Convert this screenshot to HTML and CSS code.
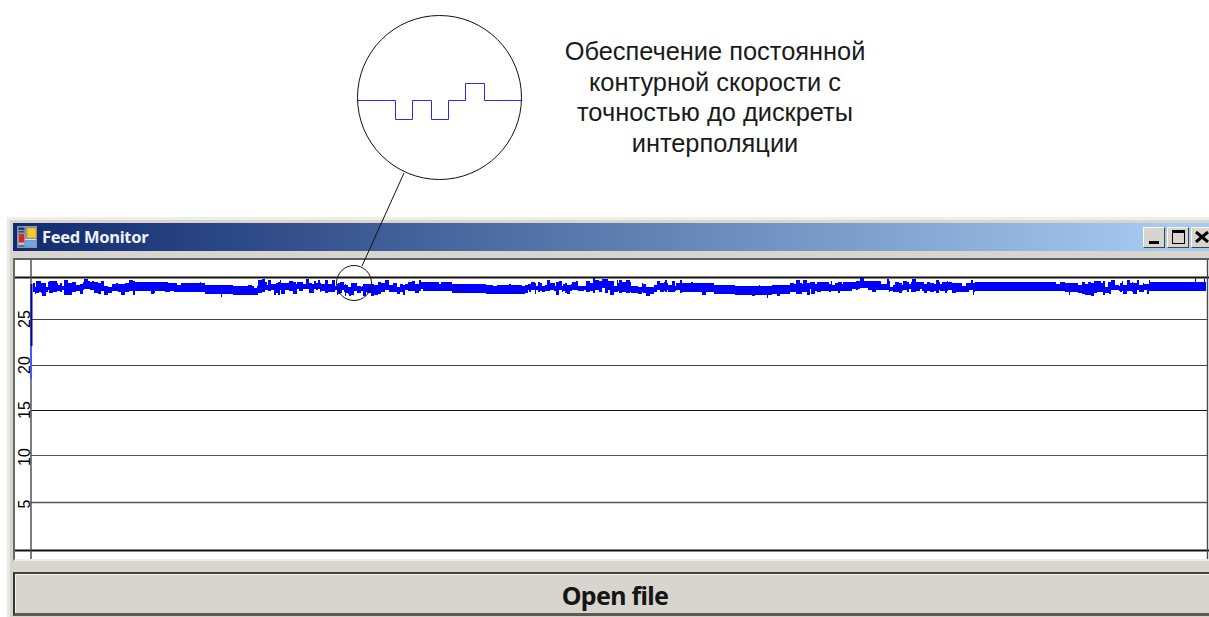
FILE: index.html
```html
<!DOCTYPE html>
<html lang="ru">
<head>
<meta charset="utf-8">
<title>Feed Monitor</title>
<link rel="stylesheet" href="styles.css">
</head>
<body>
<main class="page">
  <section class="note">
    <p class="note-text">Обеспечение постоянной<br>контурной скорости с<br>точностью до дискреты<br>интерполяции</p>
  </section>

  <section class="window">
    <header class="titlebar">
      <svg class="app-icon" viewBox="0 0 20 22" aria-hidden="true">
        <rect width="20" height="22" fill="#8b98ab"/>
        <rect x="1.5" y="1.5" width="6" height="2.5" fill="#1f3a78"/>
        <rect x="1.5" y="5" width="6" height="1.5" fill="#2c4a8c"/>
        <rect x="2" y="8" width="5" height="8" fill="#d62a20"/>
        <rect x="1.5" y="17.5" width="6" height="1" fill="#e8ecf2"/>
        <rect x="1.5" y="19.5" width="6" height="1" fill="#3a4a68"/>
        <rect x="10" y="2" width="9" height="10" fill="#f5c93a" stroke="#c08a10" stroke-width=".6"/>
        <rect x="8" y="13" width="11" height="1" fill="#dfe4ec"/>
        <rect x="9" y="15" width="9" height="5" fill="#6aa6ee"/>
      </svg>
      <span class="title">Feed Monitor</span>
      <div class="controls">
        <span class="ctl ctl-min"><i></i></span>
        <span class="ctl ctl-max"><i></i></span>
        <span class="ctl ctl-close">
          <svg viewBox="0 0 14 12" aria-hidden="true"><path d="M1 1 13 11M13 1 1 11" stroke="#000" stroke-width="3" fill="none"/></svg>
        </span>
      </div>
    </header>

    <div class="chart">
      <svg class="plot" viewBox="15 260 1201 299" width="1201" height="299" aria-label="Feed chart">
        <g class="grid">
          <path class="g-dim" d="M31 319.5H1207"/>
          <path class="g-dim" d="M31 365.5H1207"/>
          <path class="g-dark" d="M31 410.5H1207"/>
          <path class="g-soft" d="M31 455.5H1207"/>
          <path class="g-wide" d="M31 502.5H1207"/>
          <path class="g-frame" d="M15 277.5H1209M15 550.5H1209"/>
          <path class="g-axis" d="M31 260V559M1207.5 260V559"/>
        </g>
        <g class="ticks">
          <text transform="translate(30 319) rotate(-90)">25</text>
          <text transform="translate(30 365) rotate(-90)">20</text>
          <text transform="translate(30 410) rotate(-90)">15</text>
          <text transform="translate(30 457) rotate(-90)">10</text>
          <text transform="translate(30 504) rotate(-90)">5</text>
        </g>
        <path class="ramp-dark" d="M31.5 284V346"/>
        <path class="ramp-light" d="M31 346V379"/>
        <path id="trace" class="trace" d=""/>
      </svg>
    </div>

    <button class="open-btn" type="button">Open file</button>
  </section>

  <!-- Magnifier callout drawn over the window -->
  <svg class="lens" viewBox="0 0 1209 617" width="1209" height="617" aria-hidden="true">
    <path class="lens-steps" d="M357 100.5H395.5V119.5H412.5V100.5H431.5V119.5H448.5V100.5H465.5V83.5H484.5V100.5H522"/>
    <circle class="lens-ring" cx="439.5" cy="97.5" r="82"/>
    <path class="lens-ring" d="M404 173 362 266"/>
    <circle class="lens-ring" cx="354" cy="283" r="17.5"/>
  </svg>
</main>
<script src="script.js"></script>
</body>
</html>
```

FILE: styles.css
```css
* { box-sizing: border-box; }

html, body {
  margin: 0;
  background: #fff;
}

.page {
  position: relative;
  width: 1209px;
  height: 617px;
  overflow: hidden;
  background: #fff;
}

.note {
  height: 217px;
  padding: 36px 0 0 515px;
}

.note-text {
  width: 400px;
  margin: 0;
  font: 25.4px/30.7px "Liberation Sans", Arial, sans-serif;
  color: #1a1a1a;
  text-align: center;
}

.window {
  width: 1215px;
  height: 400px;
  margin-left: 7px;
  padding: 3px 6px 0 3px;
  background: #d8d5ce;
  border-top: 3px solid #eeede8;
  border-left: 3px solid #e9e8e2;
}

.titlebar {
  display: flex;
  align-items: center;
  height: 28px;
  padding: 0 3px 0 4px;
  background: linear-gradient(90deg, #0f2a6e 0%, #a6caf0 96%);
}

.app-icon {
  width: 20px;
  height: 22px;
  flex: none;
}

.title {
  margin-left: 5px;
  font: 700 16.5px/1 "Noto Sans", sans-serif;
  letter-spacing: -0.3px;
  color: #eef2fa;
}

.controls {
  display: flex;
  gap: 2px;
  margin-left: auto;
}

.ctl {
  display: flex;
  align-items: center;
  justify-content: center;
  width: 22px;
  height: 21px;
  background: #d8d5ce;
  border: 1px solid;
  border-color: #fbfaf7 #45433f #45433f #fbfaf7;
}

.ctl-min i {
  width: 10px;
  height: 3px;
  margin-top: 10px;
  background: #000;
}

.ctl-max i {
  width: 13px;
  height: 14px;
  border: 1.5px solid #000;
  border-top-width: 3px;
}

.ctl-close svg {
  width: 14px;
  height: 12px;
}

.chart {
  height: 303px;
  margin-top: 7px;
  background: #fff;
  border-top: 2px solid #5f5f5b;
  border-left: 2px solid #6a6a66;
  border-bottom: 2px solid #efeee9;
}

.plot {
  display: block;
}

.grid path {
  fill: none;
  stroke: #000;
}

.grid .g-dim { stroke: #444; stroke-width: 1.2; }
.grid .g-dark { stroke: #111; }
.grid .g-soft { stroke: #555; stroke-width: 1.2; }
.grid .g-wide { stroke: #555; stroke-width: 1.6; }
.grid .g-frame { stroke: #111; stroke-width: 1.8; }
.grid .g-axis { stroke: #484848; stroke-width: 1.4; }

.ticks text {
  font: 16px "Liberation Sans", Arial, sans-serif;
  fill: #000;
  text-anchor: middle;
}

.ramp-dark,
.ramp-light {
  fill: none;
}

.ramp-dark { stroke: #0000a8; stroke-width: 2; }
.ramp-light { stroke: #3f5cff; stroke-width: 2; }

.trace {
  fill: none;
  stroke: #0000ff;
  stroke-width: 1;
  shape-rendering: crispEdges;
}

.open-btn {
  display: block;
  width: 1204px;
  height: 44px;
  margin: 11px 0 0;
  padding: 3px 2px 0 0;
  background: #d8d5ce;
  border: 0;
  border-top: 2px solid #45443f;
  border-left: 2px solid #333;
  border-bottom: 3px solid #5a5a56;
  box-shadow: inset 0 1px 0 #f5f4f0, inset 1px 0 0 #f5f4f0;
  font: 700 25px/1 "Noto Sans", sans-serif;
  letter-spacing: -0.7px;
  color: #151515;
}

.lens {
  position: absolute;
  top: 0;
  left: 0;
  pointer-events: none;
}

.lens-ring {
  fill: none;
  stroke: #111;
  stroke-width: 1;
}

.lens-steps {
  fill: none;
  stroke: #2a2af5;
  stroke-width: 1;
}
```

FILE: script.js
```js
// Builds the feed trace: one vertical bar per pixel column. Steady stretches
// are a thick band that shifts in small steps; busy stretches keep a solid
// core and add narrow peaks above it and dips below it.
(function () {
  // from x, to x, jitter (0..1), band offset in px
  var spans = [
    [33, 135, 0.8, 0], [135, 165, 0.15, -1], [165, 205, 0.1, 0], [205, 258, 0.05, 2],
    [258, 345, 0.75, 0], [345, 405, 0.8, 0], [405, 425, 0.4, 0], [425, 452, 0.05, -2],
    [452, 522, 0.05, 1], [522, 610, 0.85, -1], [610, 682, 0.7, 0], [682, 735, 0.05, 1],
    [735, 790, 0.05, 2], [790, 835, 0.35, 0], [835, 890, 0.25, -1], [890, 975, 0.55, 0],
    [975, 1078, 0.05, 0], [1078, 1150, 0.8, 0], [1150, 1206, 0.02, 0]
  ];

  var seed = 20731;
  function rand() {
    seed = (seed * 16807) % 2147483647;
    return seed / 2147483647;
  }
  function between(a, b) {
    return a + Math.floor(rand() * (b - a + 1));
  }

  var d = [];
  spans.forEach(function (span) {
    var jitter = span[2];
    var level = span[3];
    var top = 282 + level;
    var bottom = 292 + level;
    var hold = 0;
    var run = 0;
    for (var x = span[0]; x < span[1]; x++) {
      // the band level steps now and then
      if (hold-- <= 0) {
        hold = between(10, 34);
        level = span[3] + between(-1, 1);
      }
      // a peak or dip lasts a column or two
      if (run-- <= 0) {
        run = between(0, 3);
        top = 283 + level;
        bottom = 292 + level;
        if (rand() < jitter) {
          top += rand() < 0.5 ? between(1, 3) : -between(1, 3);
        }
        if (rand() < jitter) {
          bottom += rand() < 0.5 ? between(1, 3) : -between(1, 2);
        }
      }
      d.push('M' + (x + 0.5) + ' ' + top + 'V' + bottom);
    }
  });

  // Isolated peaks near the right edge of the plot
  d.push('M1195.5 278V286', 'M1204.5 279V286');

  document.getElementById('trace').setAttribute('d', d.join(''));
})();
```
